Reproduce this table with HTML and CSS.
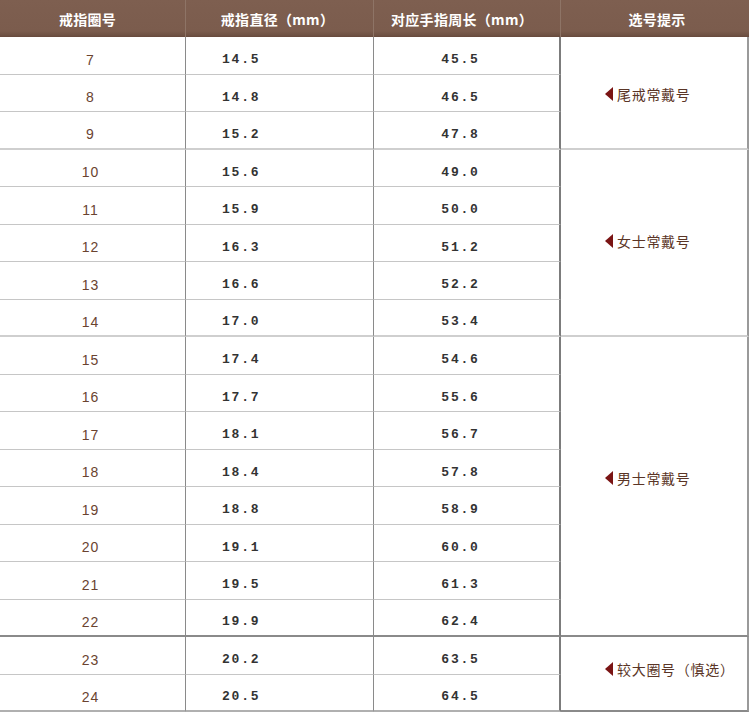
FILE: index.html
```html
<!DOCTYPE html>
<html lang="zh">
<head>
<meta charset="utf-8">
<link rel="stylesheet" href="styles.css">
</head>
<body>
<div class="size-table">
  <div class="head">戒指圈号</div>
  <div class="head">戒指直径（mm）</div>
  <div class="head">对应手指周长（mm）</div>
  <div class="head">选号提示</div>

  <div class="c num">7</div><div class="c dia">14.5</div><div class="c circ">45.5</div>
  <div class="hint g1 span3"><span class="tri"></span>尾戒常戴号</div>
  <div class="c num">8</div><div class="c dia">14.8</div><div class="c circ">46.5</div>
  <div class="c num gend">9</div><div class="c dia gend">15.2</div><div class="c circ gend">47.8</div>

  <div class="c num">10</div><div class="c dia">15.6</div><div class="c circ">49.0</div>
  <div class="hint g2 span5"><span class="tri"></span>女士常戴号</div>
  <div class="c num">11</div><div class="c dia">15.9</div><div class="c circ">50.0</div>
  <div class="c num">12</div><div class="c dia">16.3</div><div class="c circ">51.2</div>
  <div class="c num">13</div><div class="c dia">16.6</div><div class="c circ">52.2</div>
  <div class="c num gend">14</div><div class="c dia gend">17.0</div><div class="c circ gend">53.4</div>

  <div class="c num">15</div><div class="c dia">17.4</div><div class="c circ">54.6</div>
  <div class="hint g3 span8"><span class="tri"></span>男士常戴号</div>
  <div class="c num">16</div><div class="c dia">17.7</div><div class="c circ">55.6</div>
  <div class="c num">17</div><div class="c dia">18.1</div><div class="c circ">56.7</div>
  <div class="c num">18</div><div class="c dia">18.4</div><div class="c circ">57.8</div>
  <div class="c num">19</div><div class="c dia">18.8</div><div class="c circ">58.9</div>
  <div class="c num">20</div><div class="c dia">19.1</div><div class="c circ">60.0</div>
  <div class="c num">21</div><div class="c dia">19.5</div><div class="c circ">61.3</div>
  <div class="c num gend dark">22</div><div class="c dia gend dark">19.9</div><div class="c circ gend dark">62.4</div>

  <div class="c num">23</div><div class="c dia">20.2</div><div class="c circ">63.5</div>
  <div class="hint g4 span2 last"><span class="tri"></span>较大圈号（慎选）</div>
  <div class="c num last">24</div><div class="c dia last">20.5</div><div class="c circ last">64.5</div>
</div>
</body>
</html>
```

FILE: styles.css
```css
html, body {
  margin: 0;
  padding: 0;
  background: #ffffff;
}

.size-table {
  display: grid;
  grid-template-columns: 186px 188px 187px 188px;
  grid-template-rows: 37px repeat(18, 37.5px);
  width: 749px;
}

.size-table > div {
  box-sizing: border-box;
  display: flex;
  align-items: center;
}

.head {
  background: linear-gradient(to bottom, #7e5f50 0, #7b5c4d 31px, #6f5244 35px, #68493c 37px);
  color: #ffffff;
  font-family: "Noto Sans CJK SC", "Noto Sans", sans-serif;
  font-weight: 700;
  font-size: 14px;
  letter-spacing: 0.3px;
  justify-content: center;
  border-right: 1px solid #8e7466;
}

.head:nth-child(1) { padding-right: 10px; }
.head:nth-child(2) { padding-right: 4px; }
.head:nth-child(3) { padding-right: 10px; }
.head:nth-child(4) { border-right: none; padding-left: 4px; }

.c {
  border-bottom: 1px solid #c6c6c6;
  padding-top: 9px;
}

.num {
  justify-content: center;
  padding-right: 4px;
  font-family: "Liberation Sans", Arial, sans-serif;
  font-size: 14px;
  letter-spacing: 1px;
  color: #6a4330;
  border-right: 1px solid #8a8a8a;
}

.dia {
  padding-left: 36px;
  font-family: "Liberation Mono", monospace;
  font-weight: 700;
  font-size: 13px;
  letter-spacing: 1.8px;
  color: #333333;
  border-right: 1px solid #8a8a8a;
}

.circ {
  justify-content: center;
  padding-right: 12px;
  font-family: "Liberation Mono", monospace;
  font-weight: 700;
  font-size: 13px;
  letter-spacing: 1.8px;
  color: #333333;
  border-right: 2px solid #7c7c7c;
}

.gend {
  border-bottom: 2px solid #cfcfcf;
}

.gend.dark {
  border-bottom: 2px solid #8a8a8a;
}

.last {
  border-bottom: 2px solid #b0b0b0;
}

.hint {
  grid-column: 4;
  padding-left: 44px;
  font-family: "Noto Sans CJK SC", "Noto Sans", sans-serif;
  font-size: 14px;
  letter-spacing: 0.7px;
  color: #5a3526;
  border-right: 2px solid #9a9a9a;
  border-bottom: 2px solid #cfcfcf;
}

.span3 { grid-row: span 3; padding-top: 3px; }
.span5 { grid-row: span 5; padding-bottom: 3px; }
.span8 { grid-row: span 8; padding-bottom: 16px; border-bottom-color: #8a8a8a; }
.span2 { grid-row: span 2; padding-bottom: 9px; }
.hint.last { border-bottom: 2px solid #8a8a8a; }

.tri {
  display: inline-block;
  width: 0;
  height: 0;
  border-top: 7px solid transparent;
  border-bottom: 7px solid transparent;
  border-right: 8px solid #7a1414;
  margin-right: 4px;
}
```
